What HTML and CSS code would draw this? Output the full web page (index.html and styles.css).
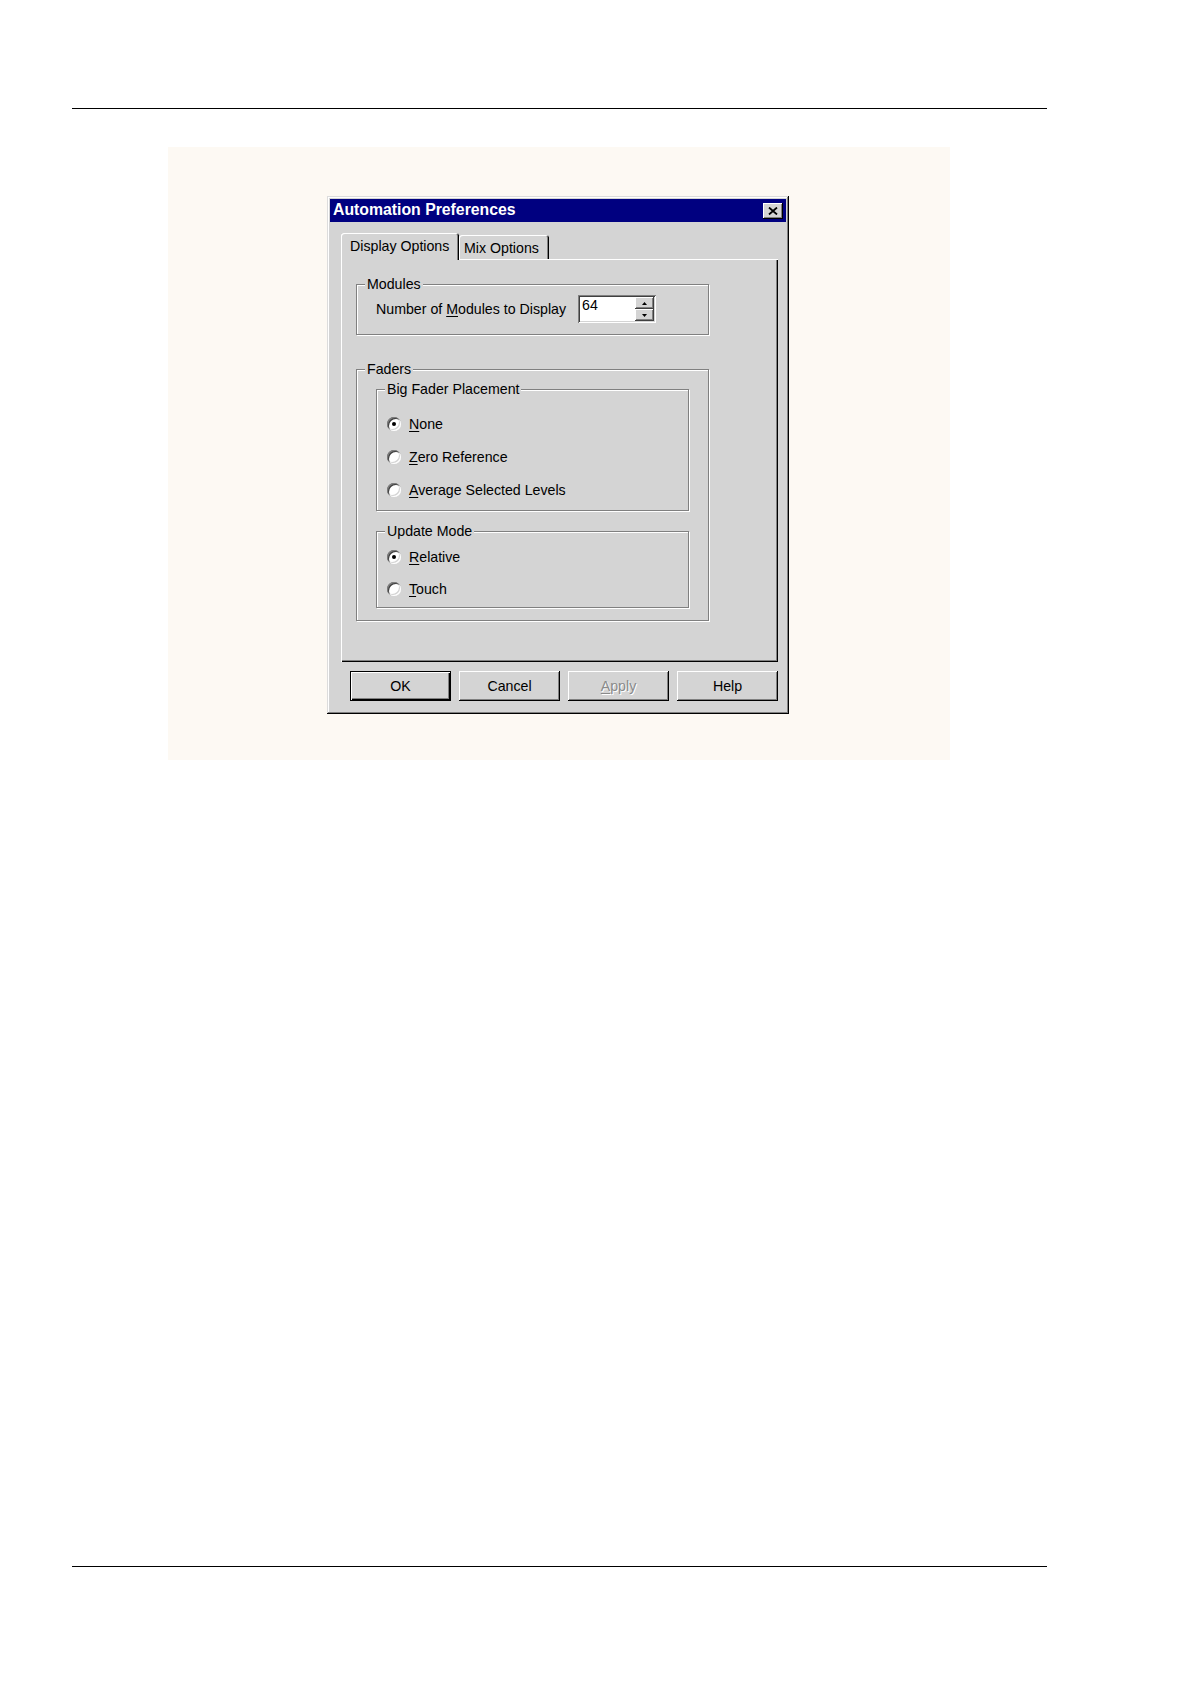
FILE: index.html
```html
<!DOCTYPE html>
<html lang="en">
<head>
<meta charset="utf-8">
<title>Automation Preferences</title>
<link rel="stylesheet" href="styles.css">
</head>
<body>
<div class="page">
  <div class="rule"></div>
  <div class="figure">
    <div class="dialog">
      <div class="titlebar">
        <span class="title">Automation Preferences</span>
        <button class="close-btn" type="button" aria-label="Close">
          <svg width="10" height="8" viewBox="0 0 10 8"><path d="M1 0.5 L9 7.5 M9 0.5 L1 7.5" stroke="#000" stroke-width="1.8" fill="none"/></svg>
        </button>
      </div>
      <div class="dialog-body">
        <div class="tabs">
          <div class="tab active">Display Options</div>
          <div class="tab">Mix Options</div>
        </div>
        <div class="panel">
          <fieldset class="group modules">
            <legend>Modules</legend>
            <div class="group-row">
              <span class="field-label">Number of <u>M</u>odules to Display</span>
              <div class="spin-edit">
                <span class="spin-value">64</span>
                <div class="spin-btns">
                  <span class="spin-btn"><svg width="5" height="3" viewBox="0 0 5 3"><polygon points="0,3 2.5,0 5,3" fill="#000"/></svg></span>
                  <span class="spin-btn"><svg width="5" height="3" viewBox="0 0 5 3"><polygon points="0,0 5,0 2.5,3" fill="#000"/></svg></span>
                </div>
              </div>
            </div>
          </fieldset>
          <fieldset class="group faders">
            <legend>Faders</legend>
            <div class="group-nest">
              <fieldset class="group sub">
                <legend>Big Fader Placement</legend>
                <div class="options">
                  <div class="opt"><span class="radio checked"></span><span class="opt-label"><u>N</u>one</span></div>
                  <div class="opt"><span class="radio"></span><span class="opt-label"><u>Z</u>ero Reference</span></div>
                  <div class="opt"><span class="radio"></span><span class="opt-label"><u>A</u>verage Selected Levels</span></div>
                </div>
              </fieldset>
              <fieldset class="group sub compact">
                <legend>Update Mode</legend>
                <div class="options">
                  <div class="opt"><span class="radio checked"></span><span class="opt-label"><u>R</u>elative</span></div>
                  <div class="opt"><span class="radio"></span><span class="opt-label"><u>T</u>ouch</span></div>
                </div>
              </fieldset>
            </div>
          </fieldset>
        </div>
        <div class="buttons">
          <button class="btn default" type="button">OK</button>
          <button class="btn" type="button">Cancel</button>
          <button class="btn disabled" type="button"><u>A</u>pply</button>
          <button class="btn" type="button">Help</button>
        </div>
      </div>
    </div>
  </div>
  <div class="rule rule-bottom"></div>
</div>
</body>
</html>
```
FILE: styles.css
```css
html, body {
  margin: 0;
  padding: 0;
  background: #ffffff;
}

body {
  font-family: "Liberation Sans", Arial, sans-serif;
  font-size: 14.2px;
  color: #000;
}

.page {
  width: 975px;
  margin-left: 72px;
  padding-top: 108px;
  padding-bottom: 100px;
}

.rule {
  height: 1px;
  background: #000;
}

.rule-bottom {
  margin-top: 806px;
}

.figure {
  width: 782px;
  height: 613px;
  margin: 38px 0 0 96px;
  padding: 49px 0 0 159px;
  box-sizing: border-box;
  background: #fdf9f3;
}

/* ---------- dialog window ---------- */
.dialog {
  width: 462px;
  height: 518px;
  box-sizing: border-box;
  padding: 3px;
  background: #d4d4d4;
  box-shadow:
    inset -1px -1px 0 #000,
    inset 1px 1px 0 #dcdcdc,
    inset -2px -2px 0 #808080,
    inset 2px 2px 0 #fff;
}

.titlebar {
  height: 23px;
  padding: 0 3px;
  background: #000080;
  display: flex;
  align-items: center;
  justify-content: space-between;
}

.title {
  font-family: "Liberation Sans", Arial, sans-serif;
  font-weight: bold;
  font-size: 15.8px;
  color: #fff;
  line-height: 23px;
  position: relative;
  top: -1px;
}

.close-btn {
  width: 20px;
  height: 16px;
  padding: 0;
  border: 0;
  margin: 0;
  display: flex;
  align-items: center;
  justify-content: center;
  background: #d4d4d4;
  box-shadow:
    inset -1px -1px 0 #000,
    inset 1px 1px 0 #fff,
    inset -2px -2px 0 #808080;
}

.dialog-body {
  padding: 11px 8px 10px 11px;
}

/* ---------- tabs ---------- */
.tabs {
  display: flex;
  align-items: flex-start;
  height: 26px;
}

.tab {
  box-sizing: border-box;
  white-space: nowrap;
  background: #d4d4d4;
  border-radius: 3px 3px 0 0;
  box-shadow:
    inset 1px 1px 0 #fff,
    inset -1px 0 0 #000,
    inset -2px 0 0 #808080;
}

.tab.active {
  width: 118px;
  height: 27px;
  padding: 0 0 0 9px;
  line-height: 26px;
  position: relative;
  z-index: 1;
}

.tab:not(.active) {
  width: 90px;
  height: 24px;
  margin-top: 2px;
  padding: 0 0 0 5px;
  line-height: 27px;
}

.panel {
  height: 403px;
  box-sizing: border-box;
  padding: 16px 0 0 15px;
  background: #d4d4d4;
  box-shadow:
    inset 1px 1px 0 #fff,
    inset -1px -1px 0 #000,
    inset -2px -2px 0 #808080;
}

/* ---------- group boxes ---------- */
.group {
  margin: 0;
  padding: 0;
  min-width: 0;
  border: 1px solid #808080;
  box-shadow: inset 1px 1px 0 #fff, 1px 1px 0 #fff;
}

.group > legend {
  margin-left: 8px;
  padding: 0 2px;
  line-height: 19px;
  height: 19px;
  background: #d4d4d4;
}

.modules,
.faders {
  width: 353px;
  box-sizing: border-box;
}

.group-row {
  display: flex;
  align-items: center;
  padding: 1px 0 11px 19px;
}

.field-label {
  width: 202px;
  white-space: nowrap;
}

u {
  text-underline-offset: 2px;
  text-decoration-thickness: 1px;
}

.spin-edit {
  width: 78px;
  height: 28px;
  box-sizing: border-box;
  padding: 2px;
  display: flex;
  justify-content: space-between;
  background: #fff;
  box-shadow:
    inset 1px 1px 0 #808080,
    inset -1px -1px 0 #fff,
    inset 2px 2px 0 #404040,
    inset -2px -2px 0 #d4d4d4;
}

.spin-value {
  padding-left: 2px;
  line-height: 17px;
}

.spin-btns {
  display: flex;
  flex-direction: column;
  width: 19px;
}

.spin-btn {
  height: 12px;
  display: flex;
  align-items: center;
  justify-content: center;
  background: #d4d4d4;
  box-shadow:
    inset -1px -1px 0 #404040,
    inset 1px 1px 0 #fff,
    inset -2px -2px 0 #808080;
}

.faders {
  margin-top: 25px;
}

.group-nest {
  display: flex;
  flex-direction: column;
  padding: 1px 19px 12px 19px;
}

.sub + .sub {
  margin-top: 11px;
}

.options {
  padding: 8px 0 4px 10px;
}

.compact .options {
  padding: 0 0 2px 10px;
}

.opt {
  height: 33px;
  display: flex;
  align-items: center;
}

.compact .opt {
  height: 32px;
}

.radio {
  width: 14px;
  height: 14px;
  flex: none;
  border-radius: 50%;
  background: #fff;
  display: flex;
  align-items: center;
  justify-content: center;
  box-shadow:
    inset 1px 1px 0 #808080,
    inset -1px -1px 0 #fff,
    inset 2px 2px 0 #404040,
    inset -2px -2px 0 #d4d4d4;
}

.radio.checked::after {
  content: "";
  width: 4px;
  height: 4px;
  border-radius: 50%;
  background: #000;
}

.opt-label {
  margin-left: 8px;
  white-space: nowrap;
}

/* ---------- buttons ---------- */
.buttons {
  display: flex;
  justify-content: flex-end;
  gap: 8px;
  margin-top: 9px;
}

.btn {
  width: 101px;
  height: 30px;
  padding: 0;
  margin: 0;
  border: 0;
  font: inherit;
  color: #000;
  background: #d4d4d4;
  box-shadow:
    inset -1px -1px 0 #000,
    inset 1px 1px 0 #fff,
    inset -2px -2px 0 #808080;
}

.btn.default {
  box-shadow:
    inset 0 0 0 1px #000,
    inset 2px 2px 0 #fff,
    inset -2px -2px 0 #000,
    inset -3px -3px 0 #808080;
}

.btn.disabled {
  color: #8a8a8a;
  text-shadow: 1px 1px 0 #fff;
}
```
